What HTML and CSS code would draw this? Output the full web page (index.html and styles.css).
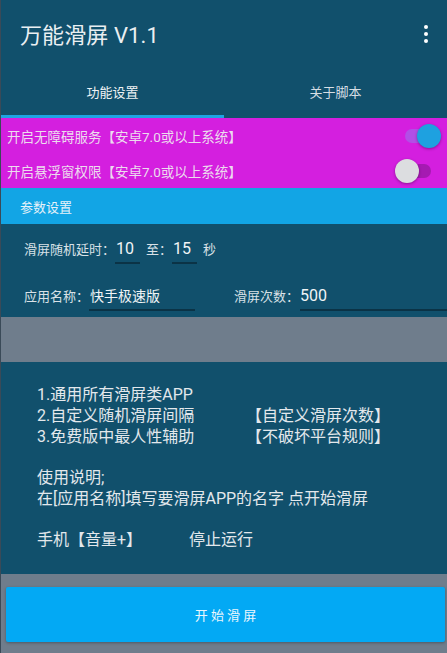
FILE: index.html
```html
<!DOCTYPE html>
<html lang="zh-CN">
<head>
<meta charset="utf-8">
<title>万能滑屏 V1.1</title>
<link rel="stylesheet" href="styles.css">
</head>
<body>
<div class="screen">
  <header class="appbar">
    <div class="title">万能滑屏 V1.1</div>
    <div class="menu"><span></span><span></span><span></span></div>
  </header>
  <nav class="tabs">
    <div class="tab active">功能设置</div>
    <div class="tab">关于脚本</div>
  </nav>
  <section class="perms">
    <div class="perm-row">
      <span>开启无障碍服务【安卓7.0或以上系统】</span>
      <div class="switch on"><div class="track"></div><div class="thumb"></div></div>
    </div>
    <div class="perm-row">
      <span>开启悬浮窗权限【安卓7.0或以上系统】</span>
      <div class="switch off"><div class="track"></div><div class="thumb"></div></div>
    </div>
  </section>
  <div class="section-title">参数设置</div>
  <section class="form">
    <div class="form-row">
      <span class="label">滑屏随机延时：</span>
      <span class="field short">10</span>
      <span class="label mid">至：</span>
      <span class="field short">15</span>
      <span class="label unit">秒</span>
    </div>
    <div class="form-row">
      <span class="label">应用名称：</span>
      <span class="field app">快手极速版</span>
      <span class="label count-label">滑屏次数：</span>
      <span class="field count">500</span>
    </div>
  </section>
  <div class="spacer"></div>
  <section class="info">
    <div class="line">1.通用所有滑屏类APP</div>
    <div class="line cols"><span class="c1">2.自定义随机滑屏间隔</span><span>【自定义滑屏次数】</span></div>
    <div class="line cols"><span class="c1">3.免费版中最人性辅助</span><span>【不破坏平台规则】</span></div>
    <div class="line blank"></div>
    <div class="line">使用说明;</div>
    <div class="line">在[应用名称]填写要滑屏APP的名字 点开始滑屏</div>
    <div class="line cols stop"><span class="c2">手机【音量+】</span><span>停止运行</span></div>
  </section>
  <footer class="footer">
    <button class="start">开 始 滑 屏</button>
  </footer>
</div>
</body>
</html>
```
FILE: styles.css
```css
* { box-sizing: border-box; }
html, body { margin: 0; padding: 0; }
body {
  width: 447px;
  height: 653px;
  overflow: hidden;
  background: #6f7d8c;
  font-family: Roboto, "Noto Sans CJK SC", sans-serif;
  color: #e3e8ec;
}
.screen {
  width: 447px;
  height: 653px;
  display: flex;
  flex-direction: column;
  border-left: 1px solid #3a4a58;
}
.appbar {
  height: 66px;
  background: #11506c;
  display: flex;
  align-items: center;
  justify-content: space-between;
  padding: 0 19px 0 19px;
}
.title {
  font-size: 22px;
  color: #eaeff2;
  letter-spacing: 0.1px;
}
.menu {
  display: flex;
  flex-direction: column;
  gap: 3px;
  padding-top: 1px;
}
.menu span {
  width: 4px;
  height: 4px;
  border-radius: 50%;
  background: #ffffff;
}
.tabs {
  height: 52px;
  background: #11506c;
  display: flex;
}
.tab {
  flex: 1;
  display: flex;
  align-items: center;
  justify-content: center;
  font-size: 13px;
  color: #d6dee4;
  border-bottom: 3px solid transparent;
  padding-top: 2px;
}
.tab.active {
  border-bottom-color: #1ea3e3;
  color: #eef2f4;
}
.perms {
  background: #d41fdf;
  height: 70px;
  display: flex;
  flex-direction: column;
}
.perm-row {
  flex: 1;
  display: flex;
  align-items: center;
  justify-content: space-between;
  padding: 0 6px 0 6px;
  font-size: 13.5px;
  color: #ecdcee;
}
.switch {
  position: relative;
  width: 40px;
  height: 24px;
}
.track {
  position: absolute;
  left: 4px;
  right: 4px;
  top: 5px;
  height: 14px;
  border-radius: 7px;
}
.thumb {
  position: absolute;
  top: 0;
  width: 24px;
  height: 24px;
  border-radius: 50%;
  box-shadow: 0 1px 3px rgba(0,0,0,0.35);
}
.switch.on .track { background: #b24fe6; }
.switch.on .thumb { right: 0; background: #1ea1e0; }
.switch.off { margin-right: 10px; }
.switch.off .track { background: #a51ab2; left: 12px; right: 0; }
.switch.off .thumb { left: 4px; background: #dcdde0; }
.section-title {
  height: 36px;
  background: #12a5e5;
  display: flex;
  align-items: center;
  padding-left: 19px;
  font-size: 13px;
  color: #e6f2f9;
}
.form {
  height: 93px;
  background: #11506c;
  display: flex;
  flex-direction: column;
  padding-top: 11px;
}
.form-row {
  display: flex;
  align-items: flex-end;
  height: 29px;
  padding-left: 23px;
}
.form-row + .form-row { margin-top: 18px; }
.label {
  font-size: 13px;
  color: #d9e1e7;
  padding-bottom: 6px;
}
.field {
  font-size: 16px;
  color: #f0f4f6;
  border-bottom: 2px solid #0b3346;
  padding-bottom: 2px;
  line-height: 22px;
}
.field.short { width: 25px; padding-left: 1px; }
.label.mid { margin-left: 6px; }
.label.unit { margin-left: 6px; }
.field.app { width: 106px; font-size: 14px; padding-left: 1px; }
.label.count-label { margin-left: 39px; }
.field.count { flex: 1; margin-left: 1px; }
.spacer {
  height: 45px;
  background: #6f7d8c;
}
.info {
  height: 212px;
  background: #11506c;
  padding: 22px 0 0 36px;
  font-size: 16px;
  color: #e3e8ec;
}
.line {
  height: 21px;
  line-height: 21px;
  white-space: nowrap;
}
.line.blank { height: 20px; }
.cols { display: flex; }
.c1 { width: 209px; }
.c2 { width: 152px; }
.line.stop { margin-top: 20px; }
.footer {
  flex: 1;
  background: #6f7d8c;
  padding: 13px 2px 0 5px;
}
.start {
  width: 100%;
  height: 55px;
  border: none;
  border-radius: 2px;
  background: #03a9f4;
  color: #eaf6fd;
  font-family: Roboto, "Noto Sans CJK SC", sans-serif;
  font-size: 13px;
  box-shadow: 0 1px 3px rgba(0,0,0,0.3);
}
```
